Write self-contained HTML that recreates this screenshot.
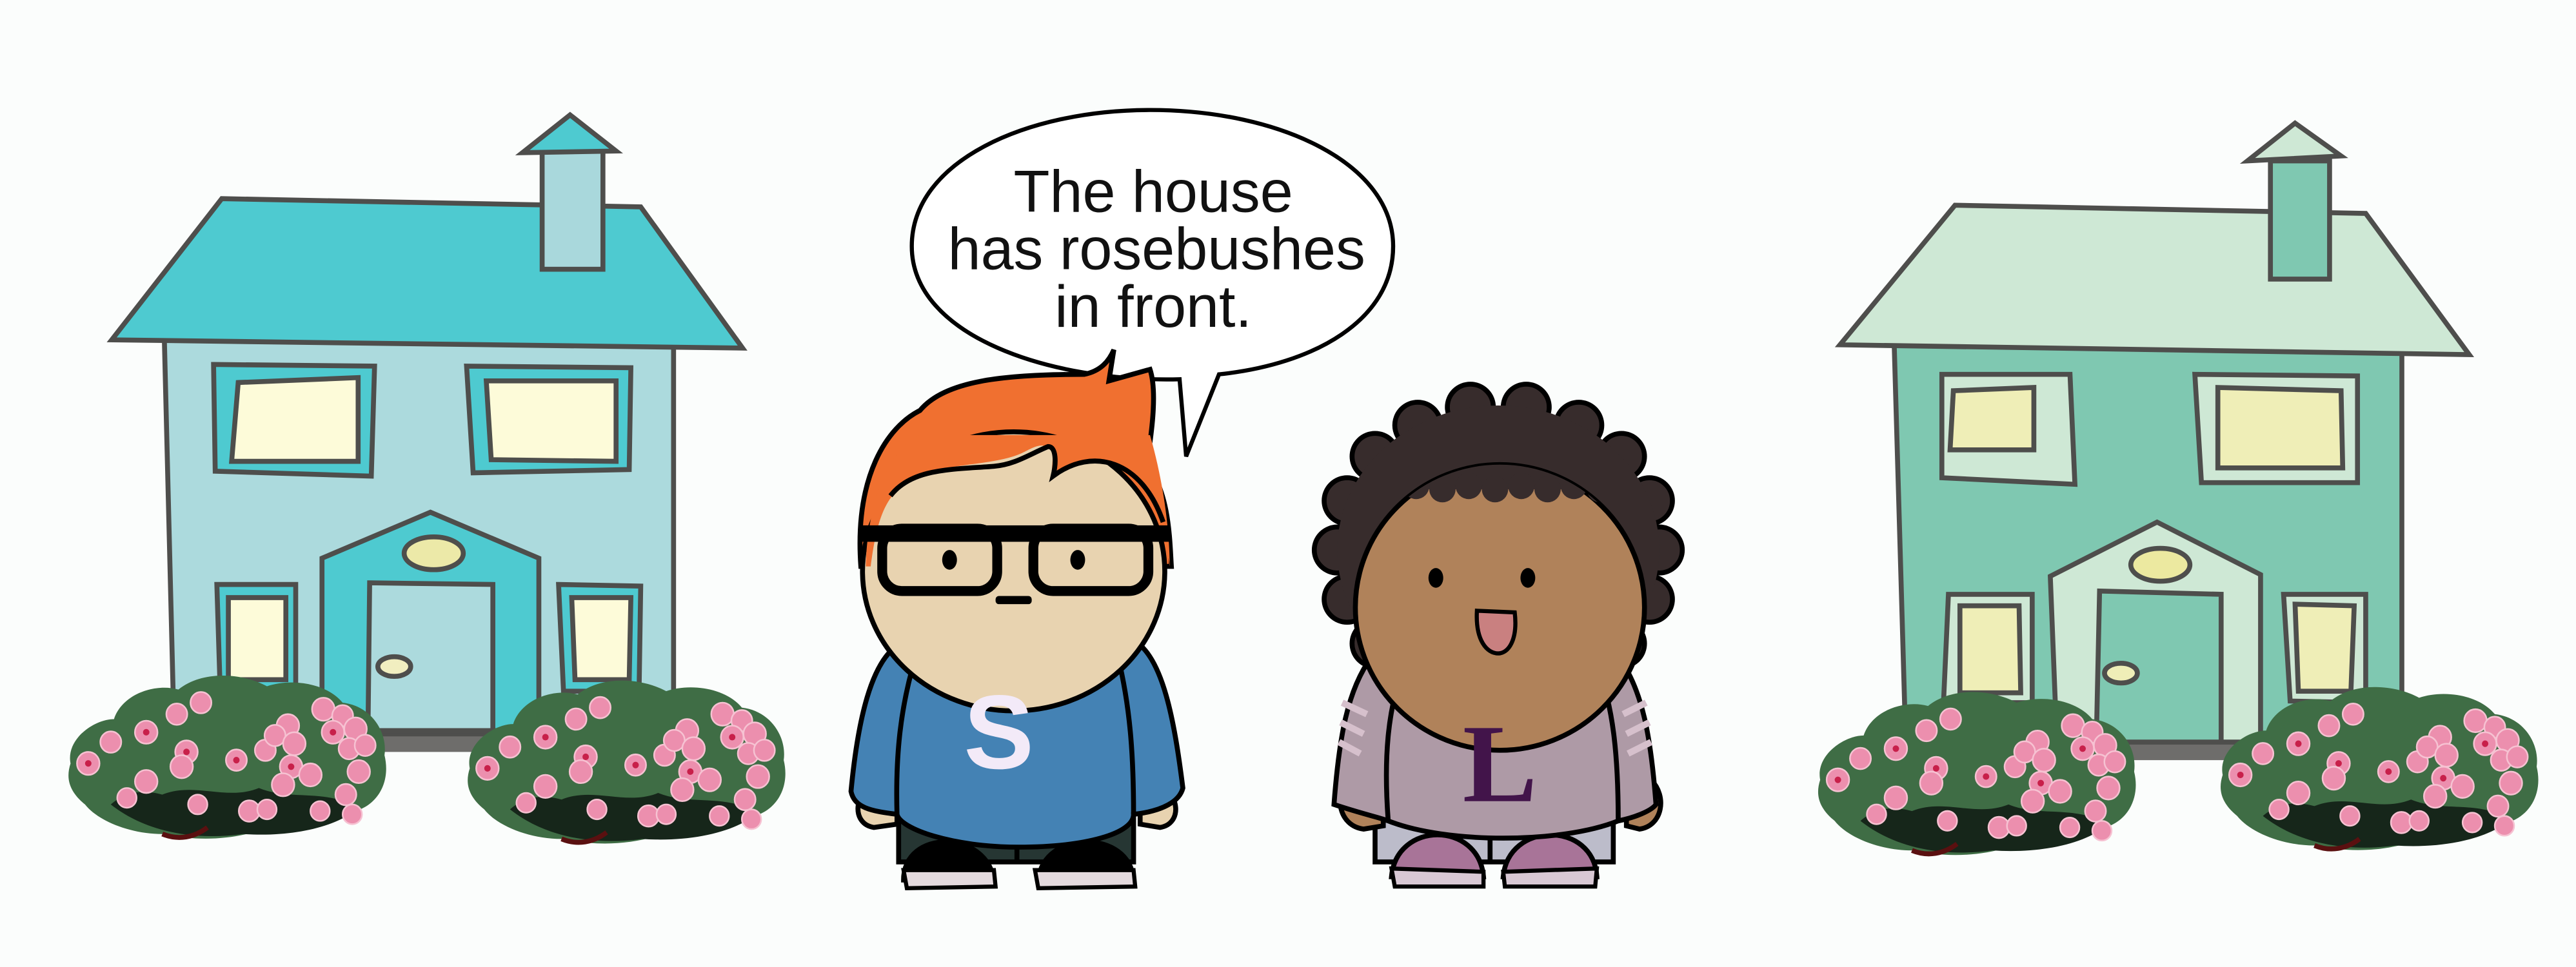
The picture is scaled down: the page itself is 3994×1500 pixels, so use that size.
<!DOCTYPE html>
<html><head><meta charset="utf-8"><style>
html,body{margin:0;padding:0;background:#fbfdfc;}
svg{display:block}
</style></head><body>
<svg width="3994" height="1500" viewBox="0 0 1568 589" preserveAspectRatio="none" xmlns="http://www.w3.org/2000/svg">
<defs>
<g id="bush">
  <path d="M3,55 C0,40 18,28 30,28 C35,13 55,6 70,10 C85,-2 110,0 125,8 C140,3 162,6 172,18 C190,20 200,36 198,50 C202,66 194,80 180,84 C165,94 140,98 120,96 C100,102 80,102 60,98 C40,98 20,90 12,80 C2,72 0,64 3,55Z" fill="#3f6d45"/>
  <path d="M28,80 C50,97 80,102 110,98 C140,100 168,94 182,82 C160,70 140,78 120,70 C100,78 80,66 60,74 C45,70 35,74 28,80Z" fill="#16261a"/>
  <path d="M60,98 C70,102 80,100 88,94" stroke="#5a1010" stroke-width="3" fill="none"/>
  <g fill="#ec8fae" stroke="#f6c2d2" stroke-width="1">
    <circle cx="14" cy="55" r="7"/><circle cx="28" cy="42" r="6.5"/><circle cx="50" cy="36" r="7"/>
    <circle cx="69" cy="25" r="6.5"/><circle cx="84" cy="18" r="6.5"/><circle cx="75" cy="48" r="7"/>
    <circle cx="72" cy="57" r="7"/><circle cx="50" cy="66" r="7"/><circle cx="38" cy="76" r="6"/>
    <circle cx="82" cy="80" r="6"/><circle cx="106" cy="53" r="6.5"/><circle cx="124" cy="47" r="6.5"/>
    <circle cx="138" cy="32" r="7"/><circle cx="130" cy="38" r="6.5"/><circle cx="142" cy="43" r="7"/>
    <circle cx="140" cy="57" r="7"/><circle cx="135" cy="68" r="7"/><circle cx="152" cy="62" r="7"/>
    <circle cx="114" cy="84" r="6.5"/><circle cx="125" cy="83" r="6"/><circle cx="160" cy="22" r="7"/>
    <circle cx="172" cy="26" r="6.5"/><circle cx="166" cy="36" r="7"/><circle cx="180" cy="34" r="7"/>
    <circle cx="176" cy="46" r="6.5"/><circle cx="186" cy="44" r="6.5"/><circle cx="182" cy="60" r="7"/>
    <circle cx="174" cy="74" r="6.5"/><circle cx="158" cy="84" r="6"/><circle cx="178" cy="86" r="6"/>
  </g>
  <g fill="#c8204a"><circle cx="14" cy="55" r="2"/><circle cx="75" cy="48" r="2"/><circle cx="140" cy="57" r="2"/><circle cx="50" cy="36" r="2"/><circle cx="166" cy="36" r="2"/><circle cx="106" cy="53" r="2"/></g>
</g>
<clipPath id="gface"><ellipse cx="913" cy="370" rx="88" ry="87"/></clipPath>
</defs>

<rect width="1568" height="589" fill="#fbfdfc"/>

<!-- LEFT HOUSE -->
<g stroke="#4e4e4c" stroke-width="3">
  <rect x="100" y="440" width="310" height="18" fill="#6e6d6b" stroke="none"/>
  <path d="M100,205 L410,210 L410,447 L106,447 Z" fill="#acdadd"/>
  <path d="M68,207 L135,121 L390,126 L452,212 Z" fill="#4ecad0"/>
  <rect x="330" y="92" width="37" height="72" fill="#a9d8dc"/>
  <path d="M318,93 L347,70 L375,92 Z" fill="#4ecad0"/>
  <path d="M130,222 L228,223 L226,290 L131,287 Z" fill="#4ecad0"/>
  <path d="M145,233 L218,230 L218,281 L141,281 Z" fill="#fdfbd9"/>
  <path d="M284,223 L384,224 L383,286 L288,288 Z" fill="#4ecad0"/>
  <path d="M296,232 L375,232 L375,281 L299,280 Z" fill="#fdfbd9"/>
  <path d="M196,340 L262,312 L328,340 L328,445 L196,445 Z" fill="#4ecad0"/>
  <path d="M225,355 L300,356 L300,445 L224,445 Z" fill="#acdadd"/>
  <ellipse cx="264" cy="337" rx="18" ry="10" fill="#ece9a8"/>
  <ellipse cx="240" cy="406" rx="10" ry="6" fill="#f1eec0"/>
  <path d="M132,356 L180,356 L180,420 L134,420 Z" fill="#4ecad0"/>
  <path d="M139,364 L174,364 L174,414 L139,414 Z" fill="#fdfbd9"/>
  <path d="M340,356 L390,357 L389,421 L343,421 Z" fill="#4ecad0"/>
  <path d="M348,364 L384,364 L383,414 L350,414 Z" fill="#fdfbd9"/>
</g>
<use href="#bush" transform="translate(40,410) scale(0.98,1)"/>
<use href="#bush" transform="translate(283,413) scale(0.98,1)"/>

<!-- RIGHT HOUSE -->
<g stroke="#4e4e4c" stroke-width="3">
  <rect x="1160" y="445" width="300" height="18" fill="#6e6d6b" stroke="none"/>
  <path d="M1153,210 L1462,215 L1462,452 L1160,452 Z" fill="#7fc8b1"/>
  <path d="M1120,210 L1190,125 L1440,130 L1503,216 Z" fill="#cee8d5"/>
  <rect x="1382" y="98" width="36" height="72" fill="#7fc8b1"/>
  <path d="M1368,98 L1397,75 L1425,95 Z" fill="#cee8d5"/>
  <path d="M1182,228 L1260,228 L1263,295 L1182,291 Z" fill="#cee8d5"/>
  <path d="M1189,238 L1238,236 L1238,274 L1187,274 Z" fill="#efeeb7"/>
  <path d="M1336,228 L1435,229 L1435,294 L1340,294 Z" fill="#cee8d5"/>
  <path d="M1350,236 L1425,238 L1426,285 L1350,285 Z" fill="#efeeb7"/>
  <path d="M1248,351 L1313,318 L1376,350 L1376,452 L1252,452 Z" fill="#cee8d5"/>
  <path d="M1278,360 L1352,362 L1352,452 L1276,452 Z" fill="#7fc8b1"/>
  <ellipse cx="1315" cy="344" rx="18" ry="10" fill="#ece9a0"/>
  <ellipse cx="1291" cy="410" rx="10" ry="6" fill="#efeeb7"/>
  <path d="M1186,362 L1237,362 L1237,428 L1183,428 Z" fill="#cee8d5"/>
  <path d="M1193,369 L1229,369 L1230,422 L1193,422 Z" fill="#efeeb7"/>
  <path d="M1390,362 L1440,362 L1440,428 L1394,427 Z" fill="#cee8d5"/>
  <path d="M1397,368 L1433,369 L1431,421 L1399,421 Z" fill="#efeeb7"/>
</g>
<use href="#bush" transform="translate(1105,420) scale(0.98,1)"/>
<use href="#bush" transform="translate(1350,417) scale(0.98,1)"/>

<!-- SPEECH BUBBLE -->
<path d="M718,231 C640,233 555,205 555,150 C555,98 625,67 700,67 C780,67 848,100 848,150 C848,195 800,222 742,228 L722,278 Z" fill="#fff" stroke="#000" stroke-width="2.5"/>
<g font-family="'Liberation Sans',sans-serif" font-size="36" text-anchor="middle" fill="#111">
  <text x="702" y="129">The house</text>
  <text x="704" y="164">has rosebushes</text>
  <text x="702" y="199">in front.</text>
</g>

<!-- BOY -->
<g stroke="#000" stroke-width="3">
  <rect x="547" y="480" width="143" height="45" fill="#263633"/>
  <line x1="619" y1="500" x2="619" y2="525"/>
  <path d="M550,536 C550,505 600,505 605,536 Z" fill="#000"/>
  <path d="M632,536 C635,505 688,505 690,536 Z" fill="#000"/>
  <path d="M550,530 L605,530 L606,540 L552,541 Z" fill="#e4dade" stroke-width="2.5"/>
  <path d="M630,530 L690,530 L691,540 L632,541 Z" fill="#e4dade" stroke-width="2.5"/>
  <path d="M532,480 C520,482 518,502 532,504 L546,502 L546,480 Z" fill="#e8d3b0"/>
  <path d="M705,480 C718,482 720,502 706,504 L694,502 L694,480 Z" fill="#e8d3b0"/>
  <path d="M548,392 C530,402 522,440 518,482 C520,492 530,494 546,496 C548,505 580,516 620,516 C660,516 690,508 690,496 C708,494 718,488 720,480 C715,440 708,400 690,390 Z" fill="#4482b4"/>
  <path d="M546,496 C545,460 548,430 558,398" fill="none"/>
  <path d="M690,496 C690,460 688,430 680,398" fill="none"/>
  <path d="M524,345 C520,290 540,260 560,250 C575,232 610,228 660,228 C670,226 675,220 678,213 L675,232 L700,225 C705,240 700,270 698,283 C712,300 712,330 713,345 Z" fill="#f07030"/>
  <ellipse cx="617" cy="348" rx="92" ry="85" fill="#e8d3b0"/>
  <path d="M527,345 C528,300 545,270 560,265 L700,265 C710,300 712,330 712,345 L708,320 C695,285 670,272 640,290 L641,276 C636,268 630,272 622,276 C600,286 560,280 545,300 C535,310 532,330 530,345 Z" fill="#f07030" stroke="none"/>
  <path d="M542,302 C555,285 580,286 605,284 C618,283 628,276 638,272 C643,272 643,282 641,290 C665,272 695,280 708,318" fill="none"/>
</g>
<g fill="#000">
  <rect x="524" y="320" width="188" height="10"/>
  <rect x="537" y="322" width="70" height="38" rx="12" fill="none" stroke="#000" stroke-width="6"/>
  <rect x="629" y="322" width="70" height="38" rx="12" fill="none" stroke="#000" stroke-width="6"/>
  <ellipse cx="578" cy="341" rx="4.5" ry="6"/>
  <ellipse cx="656" cy="341" rx="4.5" ry="6"/>
  <rect x="606" y="363" width="22" height="5" rx="2"/>
</g>
<text x="608" y="468" font-family="'Liberation Sans',sans-serif" font-weight="bold" font-size="64" text-anchor="middle" fill="#f3eaf8">S</text>

<!-- GIRL -->
<g stroke="#000" stroke-width="3">
  <rect x="837" y="485" width="145" height="40" fill="#bcbcca"/>
  <line x1="907" y1="495" x2="907" y2="525"/>
  <path d="M847,534 C850,500 900,500 903,534 Z" fill="#a87498"/>
  <path d="M915,534 C918,500 970,500 972,534 Z" fill="#a87498"/>
  <path d="M847,529 L903,531 L903,540 L849,540 Z" fill="#d8c8d4" stroke-width="2.5"/>
  <path d="M915,531 L972,529 L971,540 L916,540 Z" fill="#d8c8d4" stroke-width="2.5"/>
  <path d="M820,475 C812,485 815,503 830,505 L842,503 L842,475 Z" fill="#b0825a"/>
  <path d="M1005,475 C1015,485 1012,503 998,505 L990,503 L990,475 Z" fill="#b0825a"/>
</g>
<g fill="#372c2c" stroke="#000" stroke-width="3">
  <circle cx="1010" cy="335" r="14"/><circle cx="1004" cy="365" r="14"/><circle cx="987" cy="392" r="14"/>
  <circle cx="961" cy="411" r="14"/><circle cx="863" cy="411" r="14"/><circle cx="837" cy="392" r="14"/>
  <circle cx="820" cy="365" r="14"/><circle cx="814" cy="335" r="14"/><circle cx="820" cy="305" r="14"/>
  <circle cx="837" cy="278" r="14"/><circle cx="863" cy="259" r="14"/><circle cx="895" cy="248" r="14"/>
  <circle cx="929" cy="248" r="14"/><circle cx="961" cy="259" r="14"/><circle cx="987" cy="278" r="14"/>
  <circle cx="1004" cy="305" r="14"/>
</g>
<ellipse cx="912" cy="335" rx="98" ry="88" fill="#372c2c"/>
<g stroke="#000" stroke-width="3">
  <path d="M835,400 C820,420 815,450 812,490 C830,496 840,498 845,500 C880,514 950,514 985,500 C995,498 1005,494 1008,490 C1005,450 1000,420 985,400 Z" fill="#ae9aa6"/>
  <path d="M845,500 C842,460 845,430 855,405" fill="none"/>
  <path d="M985,500 C985,460 982,430 972,405" fill="none"/>
  <ellipse cx="913" cy="370" rx="88" ry="87" fill="#b0825a"/>
</g>
<g clip-path="url(#gface)" fill="#372c2c">
  <rect x="820" y="270" width="190" height="28"/>
  <circle cx="830" cy="296" r="8"/><circle cx="846" cy="298" r="8"/><circle cx="862" cy="296" r="8"/>
  <circle cx="878" cy="298" r="8"/><circle cx="894" cy="296" r="8"/><circle cx="910" cy="298" r="8"/>
  <circle cx="926" cy="296" r="8"/><circle cx="942" cy="298" r="8"/><circle cx="958" cy="296" r="8"/>
  <circle cx="974" cy="298" r="8"/><circle cx="990" cy="296" r="8"/><circle cx="1004" cy="298" r="8"/>
</g>
<g stroke="#d6c0cc" stroke-width="4">
  <line x1="817" y1="428" x2="832" y2="435"/><line x1="816" y1="440" x2="830" y2="447"/><line x1="815" y1="452" x2="828" y2="459"/>
  <line x1="988" y1="435" x2="1002" y2="428"/><line x1="990" y1="447" x2="1004" y2="440"/><line x1="991" y1="459" x2="1005" y2="452"/>
</g>
<g fill="#000">
  <ellipse cx="874" cy="352" rx="4.5" ry="6"/>
  <ellipse cx="930" cy="352" rx="4.5" ry="6"/>
</g>
<path d="M899,372 L922,373 C924,390 918,398 912,398 C905,398 898,390 899,372 Z" fill="#c98080" stroke="#000" stroke-width="2.5"/>
<text x="913" y="488" font-family="'Liberation Serif',serif" font-weight="bold" font-size="68" text-anchor="middle" fill="#42144a">L</text>
</svg>
</body></html>
